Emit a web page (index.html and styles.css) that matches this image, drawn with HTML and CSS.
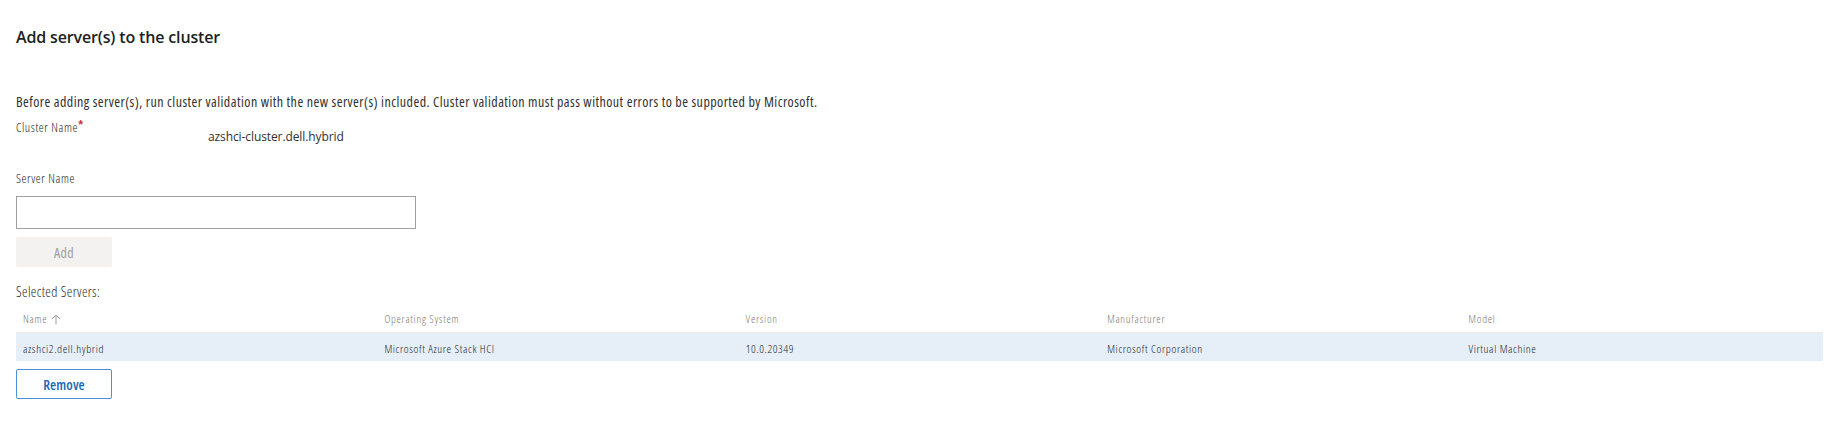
FILE: index.html
```html
<!DOCTYPE html>
<html lang="en">
<head>
<meta charset="utf-8">
<title>Add server(s) to the cluster</title>
<link rel="stylesheet" href="styles.css">
</head>
<body>
<main class="page">
  <h1 class="title">Add server(s) to the cluster</h1>
  <p class="desc">Before adding server(s), run cluster validation with the new server(s) included. Cluster validation must pass without errors to be supported by Microsoft.</p>

  <div class="cluster-row">
    <div class="label">Cluster Name<span class="req">*</span></div>
    <div class="cluster-value">azshci-cluster.dell.hybrid</div>
  </div>

  <div class="label server-label">Server Name</div>
  <input class="text-input" type="text" aria-label="Server Name">
  <button class="btn btn-disabled" type="button" disabled>Add</button>

  <div class="selected-label">Selected Servers:</div>

  <div class="table">
    <div class="thead">
      <div class="th">Name
        <svg class="sort" width="10" height="11" viewBox="0 0 10 11" aria-hidden="true"><path d="M5 10.5V1M1 5L5 1L9 5" fill="none" stroke="#a19f9d" stroke-width="1"/></svg>
      </div>
      <div class="th">Operating System</div>
      <div class="th">Version</div>
      <div class="th">Manufacturer</div>
      <div class="th">Model</div>
    </div>
    <div class="tr">
      <div class="td">azshci2.dell.hybrid</div>
      <div class="td">Microsoft Azure Stack HCI</div>
      <div class="td">10.0.20349</div>
      <div class="td">Microsoft Corporation</div>
      <div class="td">Virtual Machine</div>
    </div>
  </div>

  <button class="btn btn-outline" type="button">Remove</button>
</main>
</body>
</html>
```
FILE: styles.css
```css
html, body {
  margin: 0;
  padding: 0;
  background: #ffffff;
}
body {
  font-family: "Open Sans", "Noto Sans", sans-serif;
  color: #323130;
  font-stretch: 75%;
  font-weight: 400;
}
.page {
  padding: 25px 13px 0 16px;
  display: flex;
  flex-direction: column;
  align-items: flex-start;
}
.title {
  margin: 0;
  font-size: 16px;
  line-height: 24px;
  font-weight: 600;
  font-stretch: 100%;
  letter-spacing: -0.15px;
  color: #201f1e;
}
.desc {
  margin: 44px 0 0;
  font-size: 14px;
  line-height: 18px;
  letter-spacing: 0.45px;
}
.cluster-row {
  margin-top: 8px;
  display: flex;
  align-items: flex-start;
}
.label {
  font-size: 12.5px;
  line-height: 16px;
  letter-spacing: 0.6px;
  font-weight: 300;
  color: #252423;
  width: 192px;
}
.req {
  color: #c4262c;
  font-size: 13px;
  font-weight: 600;
  position: relative;
  top: -2px;
  margin-left: 0;
}
.cluster-value {
  margin-top: 10px;
  font-size: 12px;
  line-height: 16px;
  font-stretch: 100%;
  letter-spacing: -0.1px;
}
.server-label {
  margin-top: 26px;
}
.text-input {
  margin: 9px 0 0;
  box-sizing: border-box;
  width: 400px;
  height: 33px;
  border: 1px solid #a19f9d;
  border-radius: 0;
  padding: 0 8px;
  background: #fff;
}
.btn {
  box-sizing: border-box;
  width: 96px;
  height: 30px;
  margin-top: 8px;
  font-family: "Open Sans", sans-serif;
  font-stretch: 75%;
  font-size: 14px;
  font-weight: 600;
  padding: 0;
  border-radius: 2px;
}
.btn-disabled {
  background: #f3f2f1;
  border: none;
  color: #a19f9d;
  font-weight: 400;
  letter-spacing: 0.4px;
}
.btn-outline {
  background: #ffffff;
  border: 1px solid #4a90d9;
  color: #1467b8;
  letter-spacing: 0.1px;
}
.selected-label {
  margin-top: 16px;
  font-size: 14px;
  line-height: 18px;
  letter-spacing: 0.4px;
  font-weight: 300;
  color: #201f1e;
}
.table {
  align-self: stretch;
  display: flex;
  flex-direction: column;
}
.thead, .tr {
  display: grid;
  grid-template-columns: repeat(5, 1fr);
}
.thead {
  padding: 10px 0 5px;
  border-bottom: 1px solid #edebe9;
}
.th {
  padding-left: 7px;
  font-size: 11px;
  line-height: 16px;
  letter-spacing: 0.75px;
  font-weight: 300;
  color: #797775;
  display: flex;
  align-items: center;
  gap: 4px;
}
.sort {
  display: block;
}
.tr {
  background: #e6eef8;
  height: 28px;
  box-sizing: border-box;
  padding-top: 8px;
}
.td {
  padding-left: 7px;
  font-size: 11.5px;
  line-height: 16px;
  letter-spacing: 0.62px;
  font-weight: 300;
  color: #201f1e;
}
```
